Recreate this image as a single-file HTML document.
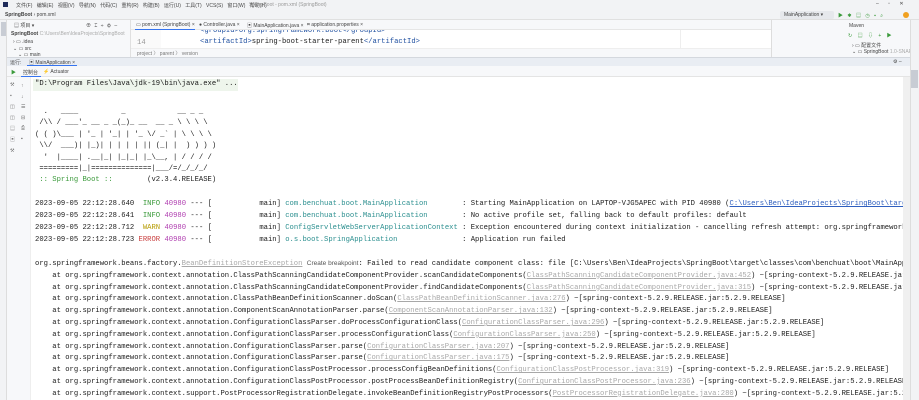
<!DOCTYPE html>
<html><head><meta charset="utf-8"><style>
*{margin:0;padding:0;box-sizing:border-box}
body{width:919px;height:400px;overflow:hidden;background:#fff;font-family:"Liberation Sans","Noto Sans CJK SC",sans-serif;font-size:6px;color:#333;position:relative}
.a{position:absolute}
.clip{position:absolute;overflow:hidden}
pre{font-family:"Liberation Mono",monospace;font-size:7.2px;color:#1a1a1a;position:absolute;left:35px;white-space:pre}
.g{color:#3b9a3b}.w{color:#b59b00}.e{color:#c94040}.p{color:#b03fb0}.c{color:#2b8f8f}.l{color:#2f5fbf;text-decoration:underline}.gl{color:#a8a8a8;text-decoration:underline}
.sm{font-size:5px;color:#444;white-space:nowrap}
</style></head><body>
<div class="a" style="left:0;top:0;width:919px;height:10px;background:#f2f3f5"></div>
<div class="a" style="left:3px;top:2px;width:5px;height:5px;background:#1e2b5a"></div>
<div class="a sm" style="left:16px;top:2px;word-spacing:3px">文件(F) 编辑(E) 视图(V) 导航(N) 代码(C) 重构(R) 构建(B) 运行(U) 工具(T) VCS(S) 窗口(W) 帮助(H)</div>
<div class="a sm" style="left:249px;top:2px;color:#999">SpringBoot - pom.xml (SpringBoot)</div>
<div class="a sm" style="left:876px;top:1px;word-spacing:8px">– ▫ ✕</div>
<div class="a" style="left:0;top:10px;width:919px;height:10px;background:#f2f3f5;border-bottom:1px solid #e0e0e0"></div>
<div class="a sm" style="left:5px;top:12px;font-weight:bold">SpringBoot <span style="font-weight:normal">› pom.xml</span></div>
<div class="a" style="left:780px;top:11px;width:54px;height:8px;background:#e6e8ec;border-radius:2px"></div>
<div class="a sm" style="left:784px;top:12px">MainApplication ▾</div>
<div class="a sm" style="left:838px;top:12px;color:#3b9a3b;word-spacing:3px">▶ ✱ ▤ ◷ ▪ ⌕</div>
<div class="a" style="left:903px;top:12px;width:6px;height:6px;background:#f0a020;border-radius:50%"></div>
<div class="a" style="left:0;top:20px;width:7px;height:380px;background:#f2f3f5;border-right:1px solid #ddd"></div>
<div class="a" style="left:1px;top:22px;width:5px;height:14px;background:#c8ccd4"></div>
<div class="a" style="left:7px;top:20px;width:124px;height:37px;background:#f7f8fa;border-right:1px solid #e0e0e0"></div>
<div class="a sm" style="left:14px;top:22px">▤ 项目 ▾</div>
<div class="a sm" style="left:86px;top:22px;word-spacing:2px">⊕ ⌶ ÷ ⚙ –</div>
<div class="clip" style="left:7px;top:29px;width:124px;height:28px">
<div class="a sm" style="left:4px;top:2px"><b>SpringBoot</b> <span style="color:#aaa">C:\Users\Ben\IdeaProjects\SpringBoot</span></div>
<div class="a sm" style="left:6px;top:10px">› ▭ .idea</div>
<div class="a sm" style="left:6px;top:17px">⌄ ▭ src</div>
<div class="a sm" style="left:11px;top:23px">⌄ ▭ main</div>
</div>
<div class="a" style="left:131px;top:20px;width:640px;height:10px;background:#f7f8fa;border-bottom:1px solid #e6e6e6"></div>
<div class="a sm" style="left:136px;top:22px">▭ pom.xml (SpringBoot) ×</div>
<div class="a" style="left:135px;top:29px;width:60px;height:1px;background:#3574f0"></div>
<div class="a sm" style="left:199px;top:22px">● Controller.java ×</div>
<div class="a sm" style="left:247px;top:22px">▣ MainApplication.java ×</div>
<div class="a sm" style="left:307px;top:22px">⌗ application.properties ×</div>
<div class="a" style="left:131px;top:30px;width:640px;height:18px;background:#fff"></div>
<div class="a" style="left:131px;top:30px;width:30px;height:18px;background:#fafafa"></div>
<pre style="left:137px;top:39px;color:#999">14</pre>
<div class="clip" style="left:131px;top:30px;width:549px;height:18px">
<pre style="left:69px;top:-3px;color:#2050a0">&lt;groupId&gt;org.springframework.boot&lt;/groupId&gt;</pre>
<pre style="left:69px;top:8px"><span style="color:#2050a0">&lt;artifactId&gt;</span>spring-boot-starter-parent<span style="color:#2050a0">&lt;/artifactId&gt;</span></pre>
</div>
<div class="a" style="left:680px;top:30px;width:90px;height:18px;background:#fff;border-left:1px solid #eee"></div>
<div class="a sm" style="left:817px;top:33px;color:#c9a000">⚠18</div>
<div class="a" style="left:131px;top:48px;width:640px;height:9px;background:#f7f8fa;border-top:1px solid #eee"></div>
<div class="a sm" style="left:137px;top:50px;color:#777">project 〉 parent 〉 version</div>
<div class="a" style="left:771px;top:20px;width:139px;height:37px;background:#f7f8fa;border-left:1px solid #ddd"></div>
<div class="a sm" style="left:849px;top:23px">Maven</div>
<div class="a sm" style="left:848px;top:32px;color:#3b9a3b;word-spacing:4px">↻ ▤ ⇩ + ▶</div>
<div class="a sm" style="left:852px;top:42px">› ▭ 配置文件</div>
<div class="clip" style="left:850px;top:48px;width:60px;height:8px"><div class="a sm" style="left:2px;top:1px">⌄ ▭ SpringBoot <span style="color:#aaa">1.0-SNAPSHOT</span></div></div>
<div class="a" style="left:7px;top:57px;width:903px;height:9px;background:#e9edf3;border-top:1px solid #d4d8de"></div>
<div class="a sm" style="left:10px;top:59px">运行:</div>
<div class="a sm" style="left:29px;top:59px">▣ MainApplication ×</div>
<div class="a" style="left:27px;top:65px;width:50px;height:1px;background:#3574f0"></div>
<div class="a sm" style="left:893px;top:59px">⚙ –</div>
<div class="a" style="left:7px;top:66px;width:903px;height:11px;background:#f7f8fa;border-bottom:1px solid #e4e4e4"></div>
<div class="a sm" style="left:11px;top:69px;color:#3b9a3b">▶</div>
<div class="a sm" style="left:23px;top:69px">控制台</div>
<div class="a" style="left:21px;top:76px;width:20px;height:1px;background:#3574f0"></div>
<div class="a sm" style="left:43px;top:69px"><span style="color:#e09030">⚡</span> Actuator</div>
<div class="a" style="left:7px;top:77px;width:24px;height:323px;background:#f7f8fa;border-right:1px solid #eee"></div>
<div class="a sm" style="left:10px;top:80px;line-height:11px;color:#777">⚒<br>▪<br>◫<br>◫<br>▤<br>▣<br>⚒</div>
<div class="a sm" style="left:21px;top:81px;line-height:10.5px;color:#666">↑<br>↓<br>☰<br>⊟<br>⎙<br>▪</div>
<div class="clip" style="left:0;top:77px;width:903px;height:323px">
<div class="a" style="left:33px;top:2px;width:205px;height:12px;background:#eef5ec"></div>
<pre style="top:3px">"D:\Program Files\Java\jdk-19\bin\java.exe" ...</pre>
<pre style="top:30px;line-height:11.4px">  .   ____          _            __ _ _
 /\\ / ___'_ __ _ _(_)_ __  __ _ \ \ \ \
( ( )\___ | '_ | '_| | '_ \/ _` | \ \ \ \
 \\/  ___)| |_)| | | | | || (_| |  ) ) ) )
  '  |____| .__|_| |_|_| |_\__, | / / / /
 =========|_|==============|___/=/_/_/_/
<span class="g"> :: Spring Boot :: </span>       (v2.3.4.RELEASE)</pre>
<pre style="top:121px;line-height:12px">2023-09-05 22:12:28.640  <span class="g">INFO</span> <span class="p">40980</span> --- [           main] <span class="c">com.benchuat.boot.MainApplication       </span> : Starting MainApplication on LAPTOP-VJG5APEC with PID 40980 (<span class="l">C:\Users\Ben\IdeaProjects\SpringBoot\target\classes</span>
2023-09-05 22:12:28.641  <span class="g">INFO</span> <span class="p">40980</span> --- [           main] <span class="c">com.benchuat.boot.MainApplication       </span> : No active profile set, falling back to default profiles: default
2023-09-05 22:12:28.712  <span class="w">WARN</span> <span class="p">40980</span> --- [           main] <span class="c">ConfigServletWebServerApplicationContext</span> : Exception encountered during context initialization - cancelling refresh attempt: org.springframework.beans
2023-09-05 22:12:28.723 <span class="e">ERROR</span> <span class="p">40980</span> --- [           main] <span class="c">o.s.boot.SpringApplication              </span> : Application run failed</pre>
<pre style="top:181px;line-height:11.8px">org.springframework.beans.factory.<span class="gl">BeanDefinitionStoreException</span> <span style="font-family:'Liberation Sans';font-size:6.5px;color:#555">Create breakpoint</span>: Failed to read candidate component class: file [C:\Users\Ben\IdeaProjects\SpringBoot\target\classes\com\benchuat\boot\MainApplication
    at org.springframework.context.annotation.ClassPathScanningCandidateComponentProvider.scanCandidateComponents(<span class="gl">ClassPathScanningCandidateComponentProvider.java:452</span>) ~[spring-context-5.2.9.RELEASE.jar:5.2.9.RELEASE]
    at org.springframework.context.annotation.ClassPathScanningCandidateComponentProvider.findCandidateComponents(<span class="gl">ClassPathScanningCandidateComponentProvider.java:315</span>) ~[spring-context-5.2.9.RELEASE.jar:5.2.9.RELEASE]
    at org.springframework.context.annotation.ClassPathBeanDefinitionScanner.doScan(<span class="gl">ClassPathBeanDefinitionScanner.java:276</span>) ~[spring-context-5.2.9.RELEASE.jar:5.2.9.RELEASE]
    at org.springframework.context.annotation.ComponentScanAnnotationParser.parse(<span class="gl">ComponentScanAnnotationParser.java:132</span>) ~[spring-context-5.2.9.RELEASE.jar:5.2.9.RELEASE]
    at org.springframework.context.annotation.ConfigurationClassParser.doProcessConfigurationClass(<span class="gl">ConfigurationClassParser.java:296</span>) ~[spring-context-5.2.9.RELEASE.jar:5.2.9.RELEASE]
    at org.springframework.context.annotation.ConfigurationClassParser.processConfigurationClass(<span class="gl">ConfigurationClassParser.java:250</span>) ~[spring-context-5.2.9.RELEASE.jar:5.2.9.RELEASE]
    at org.springframework.context.annotation.ConfigurationClassParser.parse(<span class="gl">ConfigurationClassParser.java:207</span>) ~[spring-context-5.2.9.RELEASE.jar:5.2.9.RELEASE]
    at org.springframework.context.annotation.ConfigurationClassParser.parse(<span class="gl">ConfigurationClassParser.java:175</span>) ~[spring-context-5.2.9.RELEASE.jar:5.2.9.RELEASE]
    at org.springframework.context.annotation.ConfigurationClassPostProcessor.processConfigBeanDefinitions(<span class="gl">ConfigurationClassPostProcessor.java:319</span>) ~[spring-context-5.2.9.RELEASE.jar:5.2.9.RELEASE]
    at org.springframework.context.annotation.ConfigurationClassPostProcessor.postProcessBeanDefinitionRegistry(<span class="gl">ConfigurationClassPostProcessor.java:236</span>) ~[spring-context-5.2.9.RELEASE.jar:5.2.9.RELEASE]
    at org.springframework.context.support.PostProcessorRegistrationDelegate.invokeBeanDefinitionRegistryPostProcessors(<span class="gl">PostProcessorRegistrationDelegate.java:280</span>) ~[spring-context-5.2.9.RELEASE.jar:5.2.9.RELEASE]</pre>
</div>
<div class="a" style="left:903px;top:77px;width:7px;height:323px;background:#f0f0f0"></div>
<div class="a" style="left:910px;top:20px;width:9px;height:380px;background:#f2f3f5;border-left:1px solid #ddd"></div>
<div class="a" style="left:911px;top:70px;width:7px;height:18px;background:#c8ccd4"></div>
</body></html>
